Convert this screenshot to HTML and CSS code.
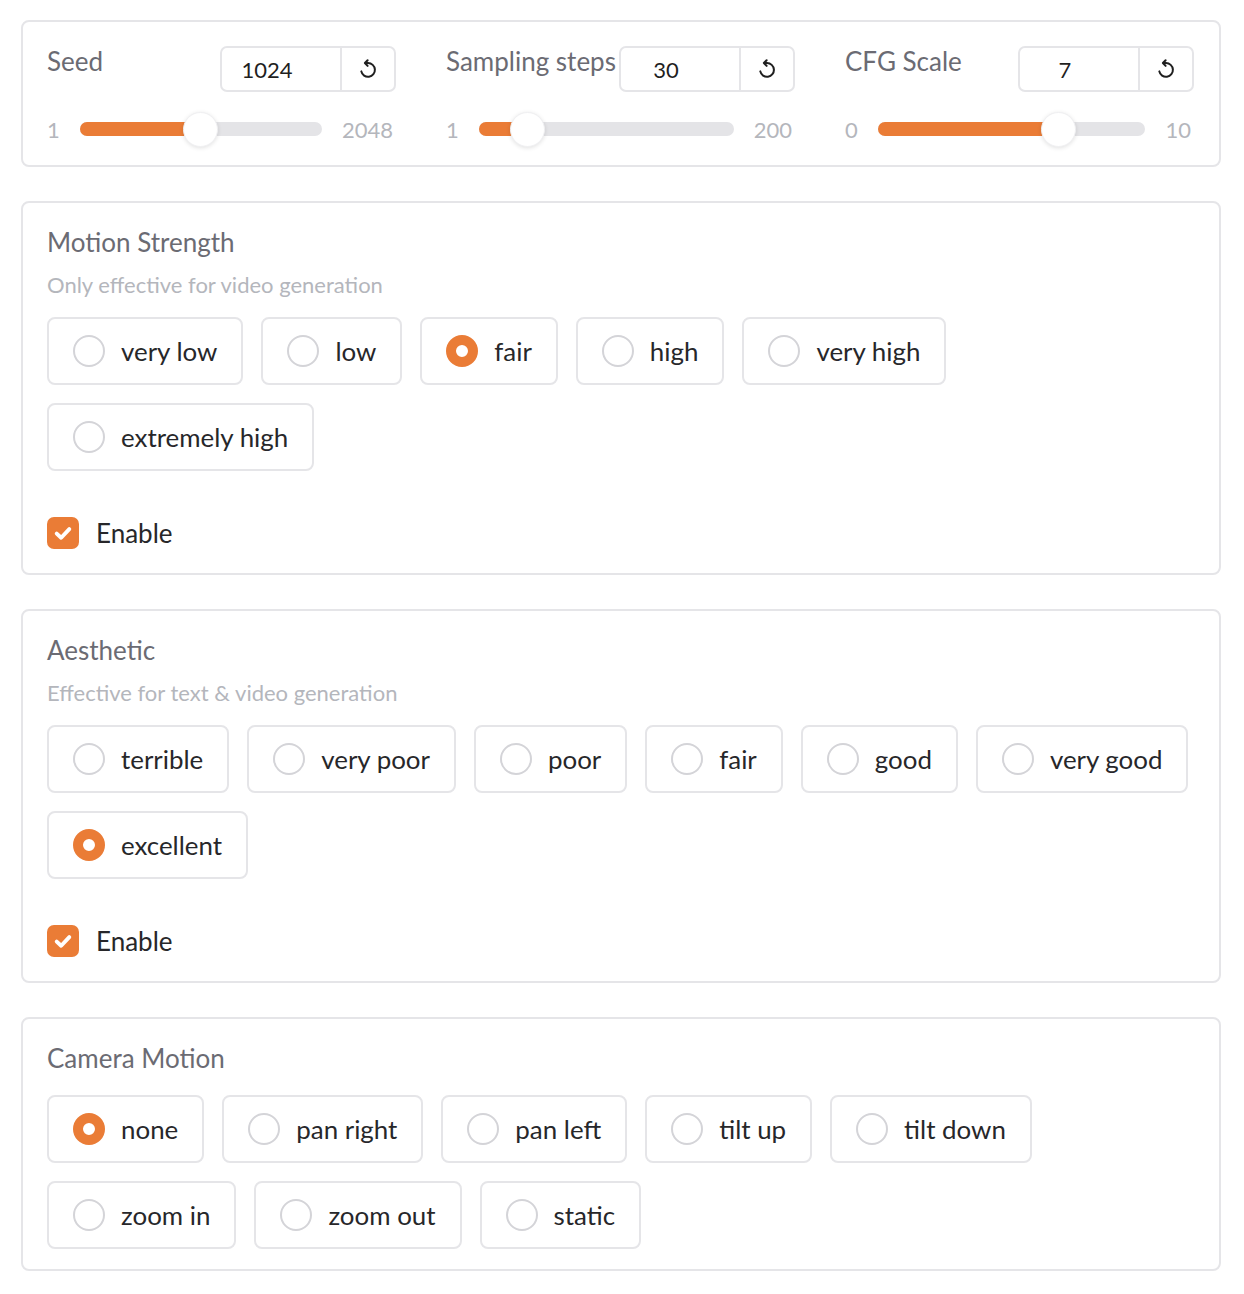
FILE: index.html
```html
<!DOCTYPE html>
<html lang="en">
<head>
<meta charset="utf-8">
<title>Generation settings</title>
<link rel="stylesheet" href="styles.css">
</head>
<body>
<div class="page">

  <section class="panel sliders">
    <div class="slider-col">
      <div class="slider-head">
        <span class="label">Seed</span>
        <div class="num-box">
          <span class="num">1024</span>
          <button class="reset" type="button" aria-label="Reset">
            <svg viewBox="0 0 24 24" width="22" height="22"><path d="M12 5.5A7.5 7.5 0 1 1 4.7 14.6M12 5.5H9M11.6 2.4L8.6 5.5L11.6 8.6" fill="none" stroke="#1f1f1f" stroke-width="2.2" stroke-linecap="round" stroke-linejoin="round"/></svg>
          </button>
        </div>
      </div>
      <div class="slider-row">
        <span class="lim">1</span>
        <div class="track" style="--p:0.5"><div class="fill"></div><div class="thumb"></div></div>
        <span class="lim max">2048</span>
      </div>
    </div>

    <div class="slider-col">
      <div class="slider-head">
        <span class="label">Sampling steps</span>
        <div class="num-box">
          <span class="num">30</span>
          <button class="reset" type="button" aria-label="Reset">
            <svg viewBox="0 0 24 24" width="22" height="22"><path d="M12 5.5A7.5 7.5 0 1 1 4.7 14.6M12 5.5H9M11.6 2.4L8.6 5.5L11.6 8.6" fill="none" stroke="#1f1f1f" stroke-width="2.2" stroke-linecap="round" stroke-linejoin="round"/></svg>
          </button>
        </div>
      </div>
      <div class="slider-row">
        <span class="lim">1</span>
        <div class="track" style="--p:0.1457"><div class="fill"></div><div class="thumb"></div></div>
        <span class="lim max">200</span>
      </div>
    </div>

    <div class="slider-col">
      <div class="slider-head">
        <span class="label">CFG Scale</span>
        <div class="num-box">
          <span class="num">7</span>
          <button class="reset" type="button" aria-label="Reset">
            <svg viewBox="0 0 24 24" width="22" height="22"><path d="M12 5.5A7.5 7.5 0 1 1 4.7 14.6M12 5.5H9M11.6 2.4L8.6 5.5L11.6 8.6" fill="none" stroke="#1f1f1f" stroke-width="2.2" stroke-linecap="round" stroke-linejoin="round"/></svg>
          </button>
        </div>
      </div>
      <div class="slider-row">
        <span class="lim">0</span>
        <div class="track" style="--p:0.7"><div class="fill"></div><div class="thumb"></div></div>
        <span class="lim max">10</span>
      </div>
    </div>
  </section>

  <section class="panel">
    <div class="title">Motion Strength</div>
    <div class="info">Only effective for video generation</div>
    <div class="radios">
      <label class="radio"><span class="dot"></span>very low</label>
      <label class="radio"><span class="dot"></span>low</label>
      <label class="radio on"><span class="dot"></span>fair</label>
      <label class="radio"><span class="dot"></span>high</label>
      <label class="radio"><span class="dot"></span>very high</label>
      <label class="radio"><span class="dot"></span>extremely high</label>
    </div>
    <label class="check"><span class="box"><svg viewBox="0 0 24 24" width="26" height="26"><path d="M6.2 12.6L10.3 16.4L17.8 8.4" fill="none" stroke="#fff" stroke-width="3.6" stroke-linecap="round" stroke-linejoin="round"/></svg></span>Enable</label>
  </section>

  <section class="panel">
    <div class="title">Aesthetic</div>
    <div class="info">Effective for text &amp; video generation</div>
    <div class="radios">
      <label class="radio"><span class="dot"></span>terrible</label>
      <label class="radio"><span class="dot"></span>very poor</label>
      <label class="radio"><span class="dot"></span>poor</label>
      <label class="radio"><span class="dot"></span>fair</label>
      <label class="radio"><span class="dot"></span>good</label>
      <label class="radio"><span class="dot"></span>very good</label>
      <label class="radio on"><span class="dot"></span>excellent</label>
    </div>
    <label class="check"><span class="box"><svg viewBox="0 0 24 24" width="26" height="26"><path d="M6.2 12.6L10.3 16.4L17.8 8.4" fill="none" stroke="#fff" stroke-width="3.6" stroke-linecap="round" stroke-linejoin="round"/></svg></span>Enable</label>
  </section>

  <section class="panel camera">
    <div class="title">Camera Motion</div>
    <div class="radios">
      <label class="radio on"><span class="dot"></span>none</label>
      <label class="radio"><span class="dot"></span>pan right</label>
      <label class="radio"><span class="dot"></span>pan left</label>
      <label class="radio"><span class="dot"></span>tilt up</label>
      <label class="radio"><span class="dot"></span>tilt down</label>
      <label class="radio"><span class="dot"></span>zoom in</label>
      <label class="radio"><span class="dot"></span>zoom out</label>
      <label class="radio"><span class="dot"></span>static</label>
    </div>
  </section>

</div>
</body>
</html>
```
FILE: styles.css
```css
* { box-sizing: border-box; }

body {
  margin: 0;
  background: #ffffff;
  font-family: Lato, "Liberation Sans", sans-serif;
  color: #27272a;
}

.page {
  display: flex;
  flex-direction: column;
  gap: 34px;
  padding: 20px 23px 20px 21px;
}

.panel {
  border: 2px solid #e5e5e8;
  border-radius: 8px;
  padding: 24px;
}

/* ---------- sliders ---------- */
.sliders {
  display: grid;
  grid-template-columns: repeat(3, 1fr);
  column-gap: 50px;
  padding: 24px 25px 18px 24px;
}

.slider-col {
  display: flex;
  flex-direction: column;
  gap: 19px;
  min-width: 0;
}

.slider-head {
  display: flex;
  justify-content: space-between;
  align-items: flex-start;
  gap: 3px;
}

.label {
  font-size: 26px;
  line-height: 30px;
  color: #6b6b73;
  white-space: nowrap;
  flex-shrink: 0;
}

.num-box {
  display: flex;
  width: 176px;
  min-width: 0;
  flex-shrink: 1;
  height: 46px;
  border: 2px solid #e5e5e8;
  border-radius: 7px;
}

.num {
  flex: 1;
  min-width: 0;
  display: flex;
  align-items: center;
  justify-content: center;
  padding-right: 28px;
  font-size: 22px;
  color: #1f1f1f;
}

.reset {
  width: 54px;
  flex-shrink: 0;
  border: 0;
  border-left: 2px solid #e5e5e8;
  background: transparent;
  padding: 0;
  display: flex;
  align-items: center;
  justify-content: center;
}

.slider-row {
  display: flex;
  align-items: center;
  height: 36px;
}

.lim {
  font-size: 22px;
  color: #b4b6bc;
  flex-shrink: 0;
}

.lim.max {
  padding-right: 3px;
}

.track {
  position: relative;
  flex: 1;
  height: 14px;
  margin: 0 20px;
  border-radius: 7px;
  background: #e4e4e7;
}

.fill {
  position: absolute;
  left: 0;
  top: 0;
  bottom: 0;
  width: calc(17px + var(--p) * (100% - 34px));
  border-radius: 7px;
  background: #ea7c36;
}

.thumb {
  position: absolute;
  top: 50%;
  left: calc(17px + var(--p) * (100% - 34px));
  width: 35px;
  height: 35px;
  margin: -17.5px 0 0 -17.5px;
  border-radius: 50%;
  background: #ffffff;
  border: 1px solid #f0f0f2;
  box-shadow: 0 1px 4px rgba(0, 0, 0, 0.12);
}

/* ---------- radio groups ---------- */
.title {
  font-size: 26px;
  line-height: 30px;
  color: #6b6b73;
}

.info {
  margin-top: 14px;
  font-size: 22px;
  line-height: 28px;
  color: #b4b6bc;
}

.radios {
  display: flex;
  flex-wrap: wrap;
  gap: 18px;
  margin-top: 18px;
}

.camera {
  padding-bottom: 20px;
}

.camera .radios {
  margin-top: 22px;
}

.radio {
  display: flex;
  align-items: center;
  gap: 16px;
  height: 68px;
  padding: 0 24px 0 24px;
  border: 2px solid #e5e5e8;
  border-radius: 8px;
  font-size: 25.9px;
  color: #27272a;
  white-space: nowrap;
}

.dot {
  width: 32px;
  height: 32px;
  border-radius: 50%;
  border: 2px solid #d4d4d8;
  background: #ffffff;
  flex-shrink: 0;
}

.radio.on .dot {
  border: 10px solid #ea7c36;
}

.check {
  display: flex;
  align-items: center;
  gap: 17px;
  margin-top: 46px;
  font-size: 26px;
  line-height: 32px;
  color: #27272a;
}

.box {
  width: 32px;
  height: 32px;
  border-radius: 7px;
  background: #ea7c36;
  display: flex;
  align-items: center;
  justify-content: center;
}
```
